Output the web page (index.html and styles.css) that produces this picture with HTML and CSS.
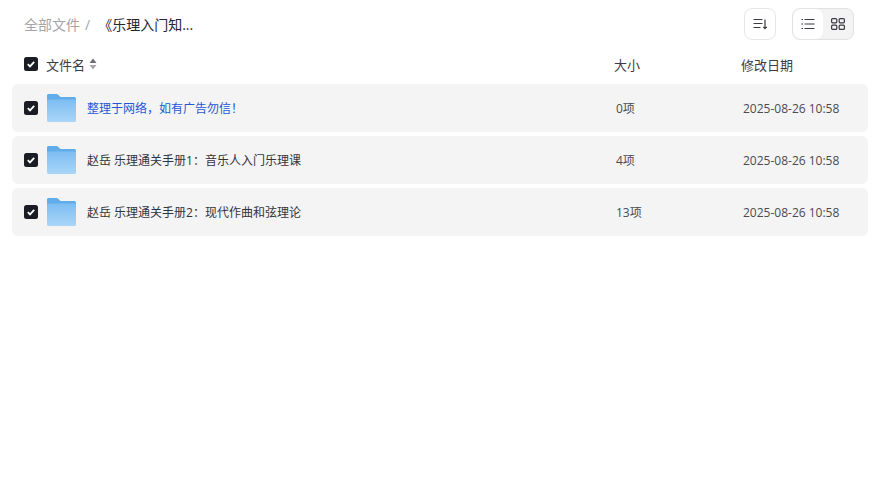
FILE: index.html
```html
<!DOCTYPE html>
<html lang="zh-CN">
<head>
  <meta charset="UTF-8">
  <title>全部文件</title>
  <link rel="stylesheet" href="styles.css">
</head>
<body>
  <svg class="defs" width="0" height="0">
    <defs>
      <linearGradient id="folder-front" x1="0" y1="0" x2="0" y2="1">
        <stop offset="0" stop-color="#7dbdf2"/>
        <stop offset="1" stop-color="#a9d6f8"/>
      </linearGradient>
      <symbol id="folder" viewBox="0 0 30 28">
        <path d="M1 1.5C1 .7 1.6 0 2.4 0h8.2c.5 0 .9.2 1.2.5L14.6 3H28.4c.8 0 1.6.7 1.6 1.5V6H1z" fill="#62ade9"/>
        <path d="M1 5.5h29v21c0 .8-.7 1.5-1.5 1.5h-26C1.700 28 1 27.300 1 26.500z" fill="url(#folder-front)"/>
      </symbol>
      <symbol id="check" viewBox="0 0 14 14">
        <rect width="14" height="14" rx="2.500" fill="#1c1c24"/>
        <path d="M3.800 7.200l2.200 2.200 4.200-4.600" fill="none" stroke="#fff" stroke-width="1.800"/>
      </symbol>
    </defs>
  </svg>

  <header class="topbar">
    <nav class="crumbs">
      <span class="crumb-root">全部文件</span>
      <span class="crumb-sep">/</span>
      <span class="crumb-current">《乐理入门知...</span>
    </nav>
    <div class="tools">
      <button class="icon-btn" type="button">
        <svg width="16" height="16" viewBox="0 0 16 16" fill="none" stroke="#3a3a42" stroke-width="1.200">
          <path d="M1.500 3.500h9M1.500 7.500h9M1.500 11.500h7"/>
          <path d="M13 3.500v9M11.300 10.800L13 12.700l1.700-1.900"/>
        </svg>
      </button>
      <div class="view-switch">
        <span class="view-opt view-on">
          <svg width="14" height="14" viewBox="0 0 14 14" fill="none" stroke="#3a3a42" stroke-width="1.200">
            <path d="M3.500 2.500h10M3.500 7h10M3.500 11.500h10"/>
            <path d="M.5 2.500h1.500M.5 7h1.500M.5 11.500h1.500"/>
          </svg>
        </span>
        <span class="view-opt">
          <svg width="14" height="14" viewBox="0 0 14 14" fill="none" stroke="#3a3a42" stroke-width="1.200">
            <rect x=".6" y="1.600" width="5.200" height="4.200" rx="1"/>
            <rect x="8.200" y="1.600" width="5.200" height="4.200" rx="1"/>
            <rect x=".6" y="8.200" width="5.200" height="4.200" rx="1"/>
            <rect x="8.200" y="8.200" width="5.200" height="4.200" rx="1"/>
          </svg>
        </span>
      </div>
    </div>
  </header>

  <div class="list-head">
    <svg class="check" width="14" height="14"><use href="#check"/></svg>
    <span class="head-name">文件名</span>
    <svg class="sort" width="8" height="12" viewBox="0 0 8 12">
      <path d="M4 .5L7.500 5h-7z" fill="#6e6e76"/>
      <path d="M4 11.500L.5 7h7z" fill="#a6a6ac"/>
    </svg>
    <span class="col-size">大小</span>
    <span class="col-date">修改日期</span>
  </div>

  <ul class="rows">
    <li class="row">
      <svg class="check" width="14" height="14"><use href="#check"/></svg>
      <svg class="folder" width="30" height="28"><use href="#folder"/></svg>
      <span class="row-name row-link">整理于网络，如有广告勿信！</span>
      <span class="col-size">0项</span>
      <span class="col-date">2025-08-26 10:58</span>
    </li>
    <li class="row">
      <svg class="check" width="14" height="14"><use href="#check"/></svg>
      <svg class="folder" width="30" height="28"><use href="#folder"/></svg>
      <span class="row-name">赵岳 乐理通关手册1：音乐人入门乐理课</span>
      <span class="col-size">4项</span>
      <span class="col-date">2025-08-26 10:58</span>
    </li>
    <li class="row">
      <svg class="check" width="14" height="14"><use href="#check"/></svg>
      <svg class="folder" width="30" height="28"><use href="#folder"/></svg>
      <span class="row-name">赵岳 乐理通关手册2：现代作曲和弦理论</span>
      <span class="col-size">13项</span>
      <span class="col-date">2025-08-26 10:58</span>
    </li>
  </ul>
</body>
</html>
```

FILE: styles.css
```css
body {
  margin: 0;
  background: #fff;
  font-family: "Open Sans", "Noto Sans CJK SC", sans-serif;
  color: #3c3c44;
}

.defs {
  display: block;
  height: 0;
}

/* top bar */
.topbar {
  display: flex;
  align-items: center;
  justify-content: space-between;
  height: 32px;
  padding: 8px 24px 0 24px;
}

.crumbs {
  display: flex;
  align-items: center;
  font-size: 14px;
}

.crumb-root {
  color: #a3a3aa;
}

.crumb-sep {
  margin: 0 8px 0 5px;
  color: #a3a3aa;
}

.crumb-current {
  color: #26262e;
}

.tools {
  display: flex;
  gap: 16px;
}

.icon-btn {
  display: flex;
  align-items: center;
  justify-content: center;
  width: 32px;
  height: 32px;
  padding: 0;
  background: #fff;
  border: 1px solid #e6e6e8;
  border-radius: 8px;
}

.view-switch {
  display: flex;
  width: 60px;
  height: 30px;
  background: #f3f3f4;
  border: 1px solid #e2e2e4;
  border-radius: 8px;
  overflow: hidden;
}

.view-opt {
  display: flex;
  flex: 1;
  align-items: center;
  justify-content: center;
}

.view-on {
  background: #fff;
  border-radius: 8px;
}

/* list */
.list-head {
  display: flex;
  align-items: center;
  height: 40px;
  padding: 4px 24px 0 24px;
  font-size: 13px;
  color: #3c3c44;
}

.head-name {
  margin-left: 8px;
}

.sort {
  margin-left: 4px;
  margin-right: auto;
}

.col-size {
  width: 127px;
  flex: none;
}

.col-date {
  width: 113px;
  flex: none;
}

.rows {
  display: flex;
  flex-direction: column;
  gap: 4px;
  margin: 0 10px 0 12px;
  padding: 0;
  list-style: none;
}

.row {
  display: flex;
  align-items: center;
  height: 48px;
  padding: 0 12px;
  background: #f4f4f5;
  border-radius: 6px;
  font-size: 12px;
  color: #4a4a52;
}

.folder {
  margin-left: 8px;
  margin-right: 11px;
  flex: none;
}

.row-name {
  flex: 1;
  color: #33333b;
}

.row-link {
  color: #2257d6;
}
```
